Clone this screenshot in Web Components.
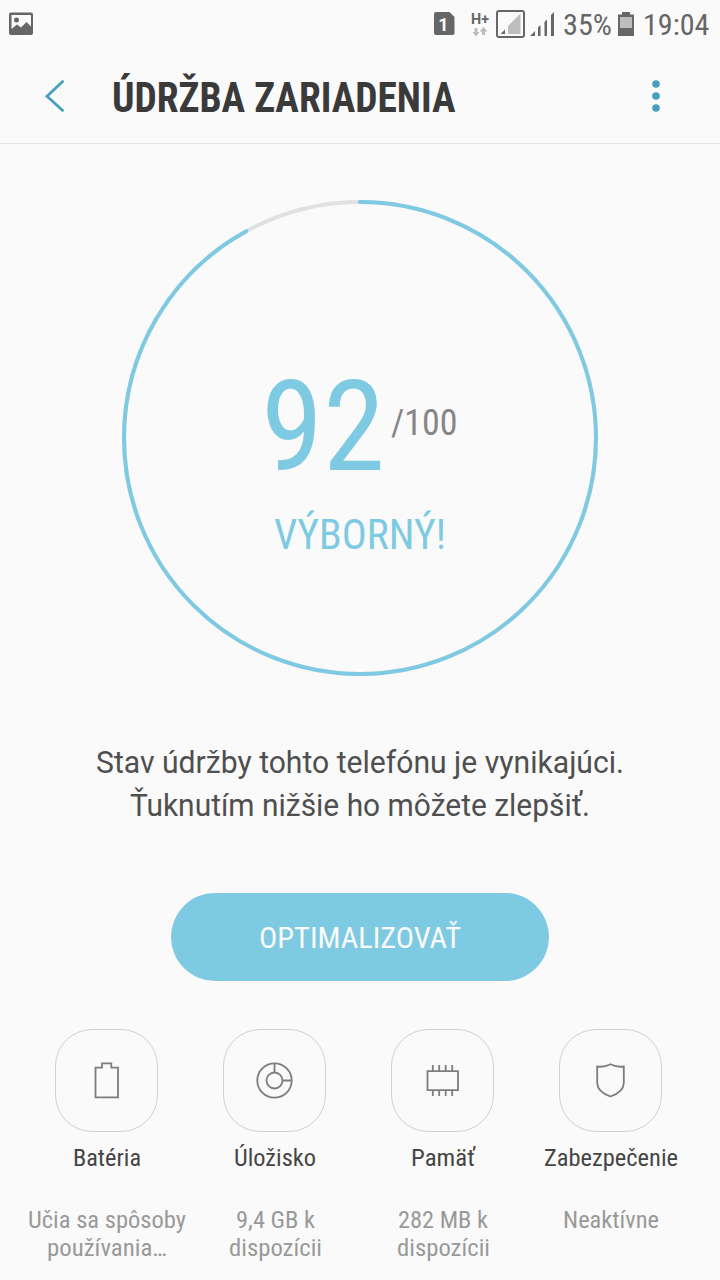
<!DOCTYPE html>
<html lang="sk">

<head>
    <meta charset="UTF-8">
    <meta name="viewport" content="width=device-width, initial-scale=1.0">
    <title>Údržba zariadenia</title>
    <style>
        body {
            margin: 0;
            background-color: #fafafa;
            font-family: "Roboto Condensed", Roboto, "Liberation Sans", sans-serif;
            overflow: hidden;
        }
    </style>
</head>

<body>
    <device-care></device-care>

    <template id="device-care">
        <style>
            :host {
                display: flex;
                flex-direction: column;
                width: 720px;
                height: 1280px;
                overflow: hidden;
                background-color: #fafafa;
            }

            .message {
                display: flex;
                flex-direction: column;
                align-items: center;
                gap: 7px;
                margin-top: 68px;
                color: #4f4f4f;
                font-family: Roboto, "Liberation Sans", sans-serif;
                --stretch: 100%;
            }

            .tiles {
                display: grid;
                grid-template-columns: repeat(4, 168px);
                margin: 48px 0 0 22.5px;
            }
        </style>
        <status-bar></status-bar>
        <title-bar></title-bar>
        <score-ring value="92"></score-ring>
        <div class="message">
            <fit-line size="31" length="528">Stav údržby tohto telefónu je vynikajúci.</fit-line>
            <fit-line size="31" length="460">Ťuknutím nižšie ho môžete zlepšiť.</fit-line>
        </div>
        <pill-button><fit-line size="30" length="202">OPTIMALIZOVAŤ</fit-line></pill-button>
        <div class="tiles">
            <care-tile icon="battery">
                <fit-line slot="name" size="24" length="68">Batéria</fit-line>
                <fit-line size="24" length="158">Učia sa spôsoby</fit-line>
                <fit-line size="24" length="120">používania…</fit-line>
            </care-tile>
            <care-tile icon="storage">
                <fit-line slot="name" size="24" length="82">Úložisko</fit-line>
                <fit-line size="24" length="79">9,4 GB k</fit-line>
                <fit-line size="24" length="93">dispozícii</fit-line>
            </care-tile>
            <care-tile icon="memory">
                <fit-line slot="name" size="24" length="64">Pamäť</fit-line>
                <fit-line size="24" length="90">282 MB k</fit-line>
                <fit-line size="24" length="93">dispozícii</fit-line>
            </care-tile>
            <care-tile icon="shield">
                <fit-line slot="name" size="24" length="134">Zabezpečenie</fit-line>
                <fit-line size="24" length="96">Neaktívne</fit-line>
            </care-tile>
        </div>
    </template>

    <template id="status-bar">
        <style>
            :host {
                display: flex;
                justify-content: space-between;
                height: 48px;
                color: #666;
            }

            svg {
                display: block;
            }

            .right {
                display: flex;
                padding-right: 11px;
            }

            fit-line {
                margin-top: 7px;
            }

            .percent {
                margin-right: 2px;
            }

            .sim {
                font-family: Roboto, sans-serif;
            }
        </style>
        <svg width="48" height="48">
            <path fill="#666" fill-rule="evenodd" d="M11 12.500H31a2 2 0 0 1 2 2V33a2 2 0 0 1-2 2H11a2 2 0 0 1-2-2V14.500a2 2 0 0 1 2-2zM11.500 15V29L17 24.500l4 3 5.500-5.500 4.500 4.500V15z" />
            <circle cx="16.500" cy="20" r="2.500" fill="#666" />
        </svg>
        <div class="right">
            <svg width="134" height="48" viewBox="429 0 134 48">
                <path fill="#666" d="M436 12h13.500l5 5v16a2 2 0 0 1-2 2H436a2 2 0 0 1-2-2V14a2 2 0 0 1 2-2z" />
                <text class="sim" x="443.500" y="30.500" text-anchor="middle" font-size="18" font-weight="700" fill="#fafafa">1</text>
                <text class="sim" x="471" y="24" font-size="15" font-weight="700" fill="#666" textLength="18" lengthAdjust="spacingAndGlyphs">H+</text>
                <path fill="#bdbdbd" d="M474.500 28h3v4h2l-3.500 4.500-3.500-4.500h2zM482 35h3v-3.500h2.500l-4-4.500-4 4.500H482z" />
                <rect x="497" y="11" width="27" height="26" rx="2" fill="none" stroke="#666" stroke-width="2" />
                <path fill="#bdbdbd" d="M508 26l12.500-12.500V34H508z" />
                <path fill="#666" d="M500.500 34l4.500-4.500V34z" />
                <path fill="#666" d="M530 36l5-5v5zM538 27.500l2.500-2.500v11H538zM544.500 22l2.500-2.500V36h-2.500zM551 15l3-3v24h-3z" />
            </svg>
            <fit-line class="percent" size="30" length="49">35%</fit-line>
            <svg width="28.500" height="48" viewBox="614 0 28.500 48">
                <path fill="#666" d="M622 12h8v2.500h4V36h-16V14.500h4z" />
                <path fill="#bdbdbd" d="M620 17h12v11h-12z" />
            </svg>
            <fit-line size="30" length="66.500">19:04</fit-line>
        </div>
    </template>

    <template id="title-bar">
        <style>
            :host {
                display: flex;
                box-sizing: border-box;
                height: 96px;
                border-bottom: 1px solid #e4e4e4;
                color: #3a3a3a;
            }

            svg {
                display: block;
            }

            fit-line {
                margin-top: 25px;
                flex: 1;
            }
        </style>
        <svg width="112" height="95" viewBox="0 48 112 95">
            <path fill="none" stroke="#479fc0" stroke-width="2.800" d="M63.500 80.800L47 96.200 63.500 111.300" />
        </svg>
        <fit-line size="42" length="343.500" weight="700">ÚDRŽBA ZARIADENIA</fit-line>
        <svg width="80" height="95" viewBox="640 48 80 95" fill="#479fc0">
            <circle cx="656" cy="84" r="3.800" />
            <circle cx="656" cy="96" r="3.800" />
            <circle cx="656" cy="108" r="3.800" />
        </svg>
    </template>

    <template id="score-ring">
        <style>
            :host {
                display: grid;
                width: 476px;
                height: 476px;
                margin: 56px auto 0;
                color: #7ecae2;
            }

            svg,
            .content {
                grid-area: 1 / 1;
            }

            circle {
                fill: none;
                stroke-width: 4;
            }

            .content {
                display: flex;
                flex-direction: column;
                align-items: center;
                gap: 9px;
                padding: 153px 1px 0 0;
            }

            .score {
                display: flex;
                align-items: flex-start;
                gap: 6px;
                padding-right: 1px;
            }

            .max {
                margin-top: 49px;
                color: #868686;
            }
        </style>
        <svg width="476" height="476">
            <circle cx="238" cy="238" r="236" stroke="#e1e1e1" />
            <circle class="value" cx="238" cy="238" r="236" stroke="#7ecae2" pathLength="100" stroke-linecap="round" transform="rotate(-90 238 238)" />
        </svg>
        <div class="content">
            <div class="score">
                <fit-line size="126" length="124">92</fit-line>
                <fit-line class="max" size="36" length="66.500">/100</fit-line>
            </div>
            <fit-line size="42" length="172">VÝBORNÝ!</fit-line>
        </div>
    </template>

    <template id="pill-button">
        <style>
            :host {
                display: flex;
                justify-content: center;
                box-sizing: border-box;
                width: 378px;
                height: 88px;
                margin: 70px auto 0;
                padding-top: 27px;
                border-radius: 44px;
                background-color: #7ecae2;
                color: #fafafa;
            }
        </style>
        <slot></slot>
    </template>

    <template id="care-tile">
        <style>
            :host {
                display: flex;
                flex-direction: column;
                align-items: center;
                color: #999;
            }

            .box {
                box-sizing: border-box;
                width: 103px;
                height: 103px;
                border: 1px solid #d0d0d0;
                border-radius: 37px;
            }

            svg {
                display: block;
                fill: none;
                stroke: #7d7d7d;
                stroke-width: 1.8;
            }

            .name {
                height: 62px;
                margin-top: 12px;
                color: #454545;
            }

            .info {
                display: flex;
                flex-direction: column;
                align-items: center;
                padding-left: 1px;
            }
        </style>
        <div class="box"><svg width="101" height="101" viewBox="0 0 101 101"></svg></div>
        <div class="name"><slot name="name"></slot></div>
        <div class="info"><slot></slot></div>
    </template>

    <script>
        const fromTemplate = (host, id) => {
            const root = host.attachShadow({ mode: "open" });
            root.appendChild(document.getElementById(id).content.cloneNode(true));
            return root;
        };

        // one line of text set to an exact width
        customElements.define("fit-line",
            class extends HTMLElement {
                connectedCallback() {
                    if (this.shadowRoot) return;
                    const size = Number(this.getAttribute("size"));
                    const length = this.getAttribute("length");
                    const weight = this.getAttribute("weight") || "400";
                    const height = size === 24 ? 28 : Math.round(size * 1.172);
                    const root = this.attachShadow({ mode: "open" });
                    root.innerHTML = `
                    <style>
                        :host {
                            display: block;
                        }

                        svg {
                            display: block;
                            overflow: visible;
                        }

                        text {
                            fill: currentColor;
                            font-stretch: var(--stretch, 75%);
                        }
                    </style>
                    <svg width="${length}" height="${height}">
                        <text y="${Math.round(size * 0.928)}" font-size="${size}" font-weight="${weight}"
                            textLength="${length}" lengthAdjust="spacingAndGlyphs"></text>
                    </svg>`;
                    root.querySelector("text").textContent = this.textContent.trim();
                }
            });

        const icons = {
            battery: `<path d="M39.500 37.700H46V33.400H55.300V37.700H62V67.400H39.500z" />`,
            storage: `<circle cx="50.500" cy="50.500" r="17.200" /><circle cx="50.500" cy="50.500" r="8" /><path d="M50.500 33.500v9M58.500 50.500h9" />`,
            memory: `<path d="M35.500 41.200H66V60.200H35.500zM40.800 35v6M47.200 35v6M53.700 35v6M60.200 35v6M40.800 60v6M47.200 60v6M53.700 60v6M60.200 60v6" />`,
            shield: `<path d="M50.500 34.200Q44 37.500 37.200 36.500V53Q37.500 62 50.500 66.500 63.500 62 63.800 53V36.500Q57 37.500 50.500 34.200z" />`
        };

        customElements.define("care-tile",
            class extends HTMLElement {
                constructor() {
                    super();
                    const root = fromTemplate(this, "care-tile");
                    root.querySelector("svg").innerHTML = icons[this.getAttribute("icon")];
                }
            });

        customElements.define("score-ring",
            class extends HTMLElement {
                constructor() {
                    super();
                    const root = fromTemplate(this, "score-ring");
                    root.querySelector(".value").setAttribute("stroke-dasharray", `${this.getAttribute("value")} 100`);
                }
            });

        ["status-bar", "title-bar", "pill-button", "device-care"].forEach((name) => {
            customElements.define(name,
                class extends HTMLElement {
                    constructor() {
                        super();
                        fromTemplate(this, name);
                    }
                });
        });
    </script>
</body>

</html>
